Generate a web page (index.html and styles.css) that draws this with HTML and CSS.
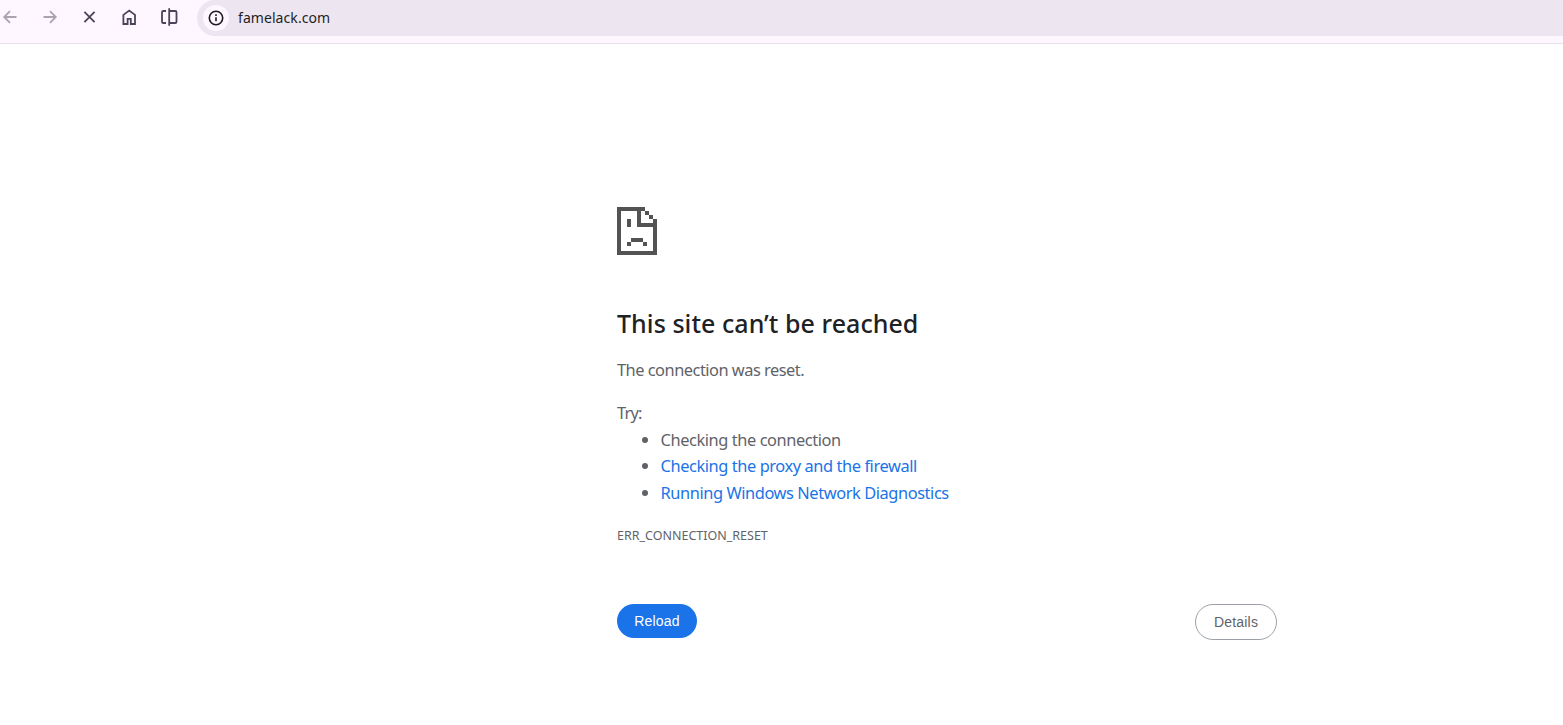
FILE: index.html
```html
<!DOCTYPE html>
<html lang="en">
<head>
<meta charset="utf-8">
<title>famelack.com</title>
<link rel="stylesheet" href="styles.css">
</head>
<body>
<header class="toolbar">
  <nav class="nav">
    <svg class="icon muted" viewBox="0 0 20 20"><path d="M16.5 10H4M10 4.2 4.2 10l5.8 5.8"/></svg>
    <svg class="icon muted" viewBox="0 0 20 20"><path d="M3.5 10H16M10 4.2l5.8 5.8-5.8 5.8"/></svg>
    <svg class="icon" viewBox="0 0 20 20"><path d="m4.4 4.9 10.2 10.2M14.6 4.9 4.4 15.1"/></svg>
    <svg class="icon" viewBox="0 0 20 20"><path d="M3.4 7.9 9.2 3.6l5.8 4.3v9.1h-4.2v-5.2H7.6V17H3.4z"/></svg>
    <svg class="icon" viewBox="0 0 20 20"><path d="M6 4H3.3Q2 4 2 5.3v9.4Q2 16 3.3 16H6M9.2 1.2v17.6M9.2 4h6q1.3 0 1.3 1.3v9.4q0 1.3-1.3 1.3h-6"/></svg>
  </nav>
  <div class="address">
    <span class="info"><svg class="icon-info" viewBox="0 0 16 16"><circle cx="8" cy="8" r="6.7"/><path d="M8 7.2v4M8 4.3v1.6"/></svg></span>
    <span class="url">famelack.com</span>
  </div>
</header>
<main class="error">
  <svg class="sad" viewBox="0 0 40 48" shape-rendering="crispEdges"><path d="M0 0h28v4h-4v12h12v-4h4v36H0zM4 4v40h32V20H20V4zM28 4h4v4h-4zM32 8h4v4h-4zM10 12h4v8h-4zM14 31h12v4H14zM10 35h4v4h-4zM26 35h4v4h-4z" fill-rule="evenodd"/></svg>
  <h1 class="title">This site can’t be reached</h1>
  <p class="summary">The connection was reset.</p>
  <p class="try">Try:</p>
  <ul class="tips">
    <li>Checking the connection</li>
    <li><a>Checking the proxy and the firewall</a></li>
    <li><a>Running Windows Network Diagnostics</a></li>
  </ul>
  <p class="code">ERR_CONNECTION_RESET</p>
  <div class="actions">
    <button class="btn reload">Reload</button>
    <button class="btn details">Details</button>
  </div>
</main>
</body>
</html>
```
FILE: styles.css
```css
* { box-sizing: border-box; }
body {
  margin: 0;
  height: 725px;
  overflow: hidden;
  background: #fff;
  color: #5f6368;
  font: 16.4px/27px "Noto Sans", sans-serif;
}
.toolbar {
  display: flex;
  height: 44px;
  background: #fef7ff;
  border-bottom: 1px solid #e7dfee;
}
.nav {
  display: flex;
  gap: 20px;
  width: 197px;
  flex: none;
  padding-top: 7px;
}
.icon {
  width: 20px;
  height: 20px;
  flex: none;
  fill: none;
  stroke: #4a4458;
  stroke-width: 1.8;
}
.nav .icon:first-child { margin-left: -0.5px; }
.muted { stroke: #aaa4ae; }
.address {
  display: flex;
  align-items: center;
  flex: 1;
  height: 36px;
  padding-left: 6px;
  background: #ede6f1;
  border-radius: 18px 0 0 18px;
}
.info {
  display: flex;
  align-items: center;
  justify-content: center;
  width: 26px;
  height: 26px;
  border-radius: 50%;
  background: #fef7ff;
}
.icon-info {
  width: 16px;
  height: 16px;
  fill: none;
  stroke: #1d1b20;
  stroke-width: 1.6;
}
.url {
  margin: -2px 0 0 9px;
  color: #1f1f1f;
  font-size: 14px;
  letter-spacing: 0.07px;
}
.error {
  width: 660px;
  margin: 163px 0 0 617px;
}
.sad {
  display: block;
  width: 40px;
  height: 48px;
  fill: #535353;
}
.title {
  margin: 52px 0 0;
  color: #202124;
  font-size: 25px;
  line-height: 32px;
  font-weight: 500;
  letter-spacing: 0.05px;
  white-space: nowrap;
}
.summary {
  margin: 17px 0 0;
  letter-spacing: -0.5px;
}
.try {
  margin: 16px 0 0;
  letter-spacing: -0.8px;
}
.tips {
  margin: 0;
  padding: 0.7px 0 0 43.5px;
  line-height: 26.5px;
  letter-spacing: -0.42px;
}
.tips a { color: #1a73e8; }
.code {
  margin: 16.8px 0 0;
  font-size: 12.5px;
  line-height: 26px;
}
.actions {
  display: flex;
  justify-content: space-between;
  align-items: flex-start;
  margin-top: 55px;
}
.btn {
  border-radius: 18px;
  font: 14px "Liberation Sans", Arial, sans-serif;
  letter-spacing: 0.2px;
  padding: 0;
}
.reload {
  width: 80px;
  height: 34px;
  border: 0;
  background: #1a73e8;
  color: #fff;
}
.details {
  width: 82px;
  height: 36px;
  border: 1px solid #9aa0a6;
  background: #fff;
  color: #5f6368;
}
```
